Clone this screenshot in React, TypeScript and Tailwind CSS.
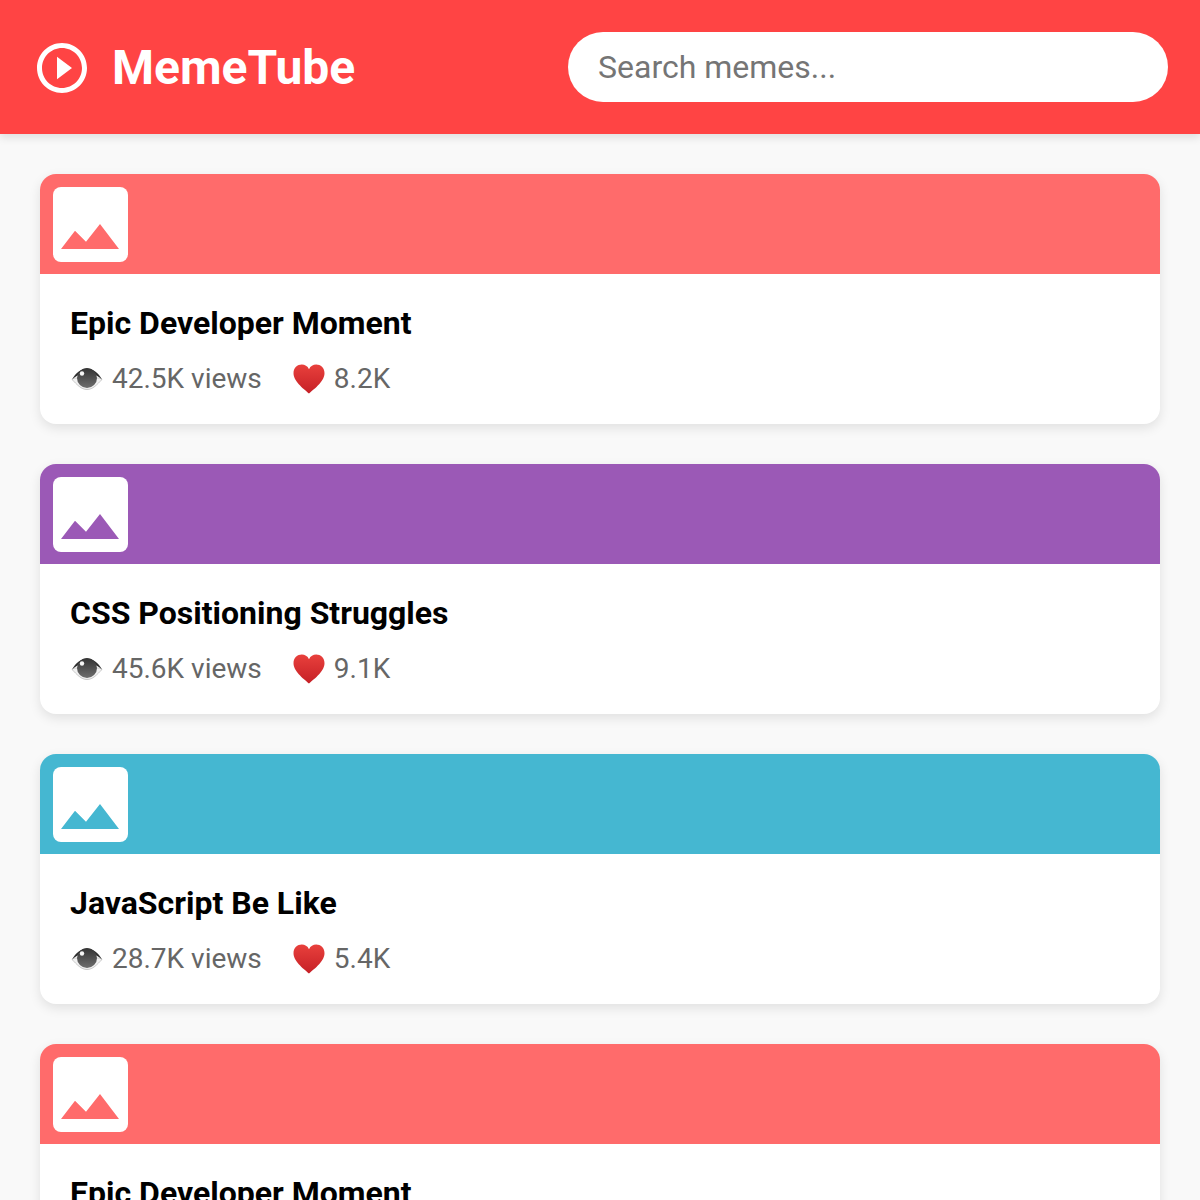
const memes = [
  { title: "Epic Developer Moment", views: "42.5K views", likes: "8.2K", banner: "bg-[#ff6b6b]", fill: "#ff6b6b" },
  { title: "CSS Positioning Struggles", views: "45.6K views", likes: "9.1K", banner: "bg-[#9b59b6]", fill: "#9b59b6" },
  { title: "JavaScript Be Like", views: "28.7K views", likes: "5.4K", banner: "bg-[#45b7d1]", fill: "#45b7d1" },
  { title: "Epic Developer Moment", views: "42.5K views", likes: "8.2K", banner: "bg-[#ff6b6b]", fill: "#ff6b6b" },
];

const EyeIcon = () => (
  <svg viewBox="0 0 34 26" className="w-[34px] h-[26px] shrink-0">
    <defs>
      <linearGradient id="iris" x1="0" y1="0" x2="0" y2="1">
        <stop offset="0" stopColor="#333333" />
        <stop offset="1" stopColor="#6e6e6e" />
      </linearGradient>
    </defs>
    <path d="M2 13.5C7 18.5 11 23.5 17 23.5S27 18.5 32 13.5L30 12H4Z" fill="#f1f1f1" stroke="#bdbdbd" strokeWidth="0.8" />
    <path d="M2 13.5C6 6.5 11 2.5 17 2.5S28 6.5 32 13.5C28 10 25 8.5 23 8H11C9 8.5 6 10 2 13.5Z" fill="#2f2f2f" />
    <circle cx="17" cy="12" r="10" fill="url(#iris)" />
    <circle cx="12" cy="7.5" r="2.2" fill="#f5f5f5" />
  </svg>
);

const HeartIcon = () => (
  <svg viewBox="-1 0 34 30" className="w-[34px] h-[30px] shrink-0">
    <defs>
      <linearGradient id="heart" x1="0" y1="0" x2="0" y2="1">
        <stop offset="0" stopColor="#e8403c" />
        <stop offset="1" stopColor="#c62026" />
      </linearGradient>
    </defs>
    <path
      d="M16 29.5C13 26.5 0.5 18 0.5 9.2 0.5 4 4.4 0.6 8.8 0.6 11.8 0.6 14.6 2.2 16 5.2 17.4 2.2 20.2 0.6 23.2 0.6 27.6 0.6 31.5 4 31.5 9.2 31.5 18 19 26.5 16 29.5Z"
      fill="url(#heart)"
    />
  </svg>
);

const MemeCard = ({ meme }: { meme: (typeof memes)[number] }) => {
  return (
    <div className="rounded-[16px] bg-white overflow-hidden shadow-[0_4px_12px_rgba(0,0,0,0.1)] shrink-0">
      <div className={`h-[100px] p-[13px] ${meme.banner}`}>
        <div className="w-[75px] h-[75px] bg-white rounded-lg">
          <svg viewBox="0 0 75 75" className="w-[75px] h-[75px]">
            <path d="M8 62 22 43.7 33 54.7 47 37 66 62Z" fill={meme.fill} />
          </svg>
        </div>
      </div>
      <div className="p-[30px] h-[150px]">
        <h3 className="text-[32px] leading-[38px] font-bold text-black">{meme.title}</h3>
        <div className="flex gap-[30px] mt-5 text-[28px] leading-[33px] text-[#666666]">
          <span className="flex items-center gap-2">
            <EyeIcon />
            {meme.views}
          </span>
          <span className="flex items-center gap-2">
            <HeartIcon />
            {meme.likes}
          </span>
        </div>
      </div>
    </div>
  );
};

const App = () => {
  return (
    <div className="h-[1200px] overflow-hidden bg-[#f9f9f9] font-['Roboto',sans-serif]">
      {/* Header */}
      <header className="h-[134px] bg-[#ff4444] flex items-center justify-between px-8 shadow-[0_4px_8px_rgba(0,0,0,0.1)] relative">
        <div className="flex items-center gap-5 mt-0.5">
          <svg viewBox="0 0 24 24" className="w-[60px] h-[60px]" fill="white">
            <path d="M10 16.5l6-4.5-6-4.5v9zM12 2C6.48 2 2 6.48 2 12s4.48 10 10 10 10-4.48 10-10S17.52 2 12 2zm0 18c-4.41 0-8-3.59-8-8s3.59-8 8-8 8 3.59 8 8-3.59 8-8 8z" />
          </svg>
          <h1 className="text-[48px] leading-[56px] font-bold text-white">MemeTube</h1>
        </div>
        <input
          type="text"
          placeholder="Search memes..."
          className="w-[600px] h-[70px] rounded-[35px] bg-white px-[30px] text-[32px] outline-none placeholder:text-[#757575]"
        />
      </header>

      {/* Meme list */}
      <main className="flex flex-col gap-10 p-10">
        {memes.map((meme, i) => (
          <MemeCard key={i} meme={meme} />
        ))}
      </main>
    </div>
  );
};

export default App;
